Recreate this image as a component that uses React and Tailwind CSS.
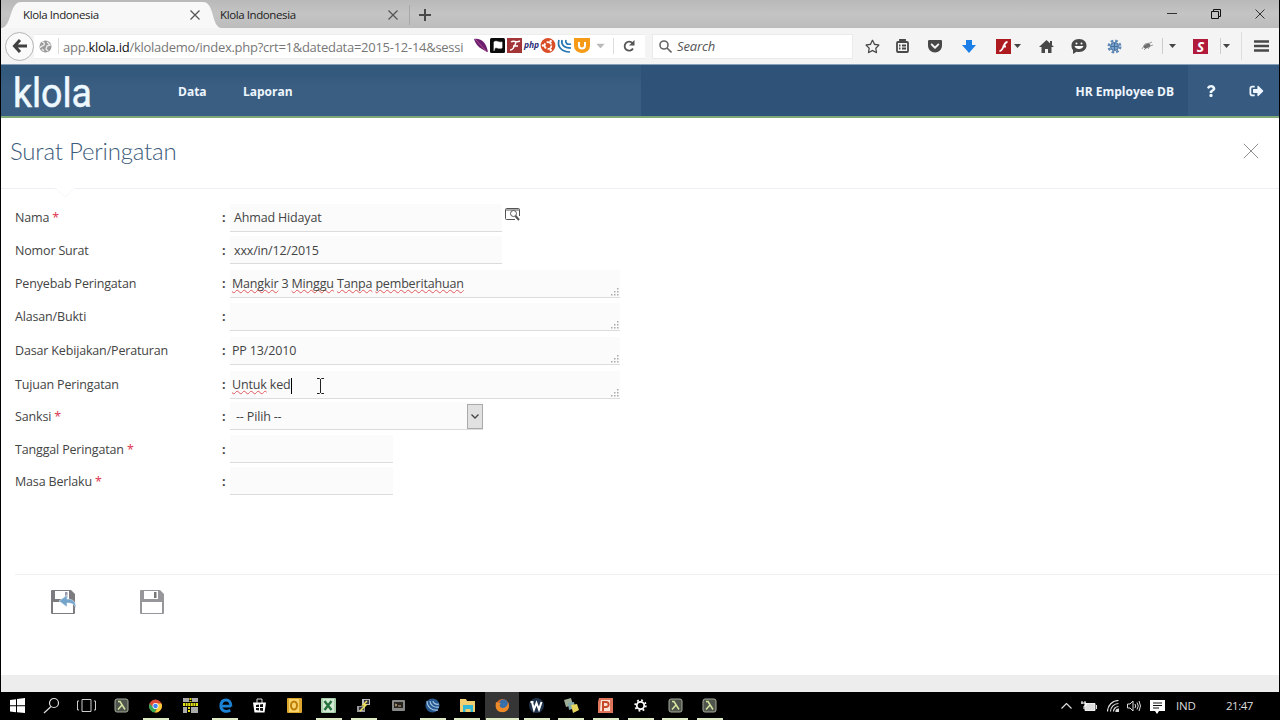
import React from 'react';
import { FaRegStar, FaGetPocket, FaQuestion, FaSignOutAlt } from 'react-icons/fa';

const FIELDS = [
  { label: 'Nama', required: true, row: 'h-[31px]', input: 'w-[272px] pl-1 leading-[27px]', value: ['Ahmad Hidayat'], lookup: true, lead: 'leading-[28px]' },
  { label: 'Nomor Surat', row: 'h-8', input: 'w-[272px] pl-1 leading-[29px]', value: ['xxx/in/12/2015'], lead: 'leading-[27px]' },
  { label: 'Penyebab Peringatan', row: 'h-[34px]', input: 'w-[390px] pl-0.5 leading-[28px]', value: ['~Mangkir', ' 3 ', '~Minggu', ' ', '~Tanpa', ' ', '~pemberitahuan'], area: true, lead: 'leading-[28px]' },
  { label: 'Alasan/Bukti', row: 'h-[33px]', input: 'w-[390px] pl-0.5', value: [], area: true, lead: 'leading-[28px]' },
  { label: 'Dasar Kebijakan/Peraturan', row: 'h-[34px]', input: 'w-[390px] pl-0.5 leading-[28px]', value: ['PP 13/2010'], area: true, lead: 'leading-[28px]' },
  { label: 'Tujuan Peringatan', row: 'h-[34px]', input: 'w-[390px] pl-0.5 leading-[28px]', value: ['~Untuk', ' ked'], area: true, caret: true, lead: 'leading-[28px]' },
  { label: 'Sanksi', required: true, row: 'h-[31px]', input: 'w-[253px] pl-1.5 leading-[30px]', value: ['-- Pilih --'], select: true, lead: 'leading-[27px]' },
  { label: 'Tanggal Peringatan', required: true, row: 'h-[33px]', input: 'w-[163px]', value: [], lead: 'leading-[27px]' },
  { label: 'Masa Berlaku', required: true, row: 'h-8', input: 'w-[163px]', value: [], lead: 'leading-[27px]' },
];

const TASKS = [
  ['start'], ['search'], ['tasks'], ['lambda'], ['chrome', 1], ['grid'], ['edge', 1], ['store'], ['outlook'], ['excel', 1], ['putty', 1],
  ['term'], ['globe', 1], ['folder', 1], ['firefox', 1], ['word', 1], ['notes', 1], ['ppt', 1], ['gear', 1], ['lambda', 1], ['lambda', 1],
];

function Cross({ className }) {
  return (
    <svg className={className} viewBox="0 0 10 10" fill="none" stroke="currentColor"><path d="M.5.5l9 9M9.5.5l-9 9" /></svg>
  );
}

function Caret({ className = 'text-[#444]' }) {
  return <svg className={`w-[7px] h-1 ${className}`} viewBox="0 0 7 4" fill="currentColor"><path d="M0 0h7L3.5 4z" /></svg>;
}

function TabBar() {
  return (
    <div className="relative flex h-7 bg-gradient-to-b from-[#b9b9b9] via-[#c4c4c4] to-[#bcbcbc] text-[11.5px] text-[#1c1c1c]">
      <svg className="absolute left-0 top-0 w-[222px] h-7" viewBox="0 0 222 28"><path d="M0 28C11 28 8 2 20 2H202C214 2 210 28 221 28Z" fill="#f8f8f8" /></svg>
      <div className="relative w-[206px] pl-[22px] pr-[7px] flex items-center justify-between pt-0.5">
        <span className="tracking-[-0.4px]">Klola Indonesia</span>
        <Cross className="w-[10px] h-[10px] text-[#555] [stroke-width:1.3]" />
      </div>
      <div className="w-[202px] pl-[13px] pr-[11px] flex items-center justify-between pt-0.5">
        <span className="tracking-[-0.4px]">Klola Indonesia</span>
        <Cross className="w-[10px] h-[10px] text-[#555] [stroke-width:1.3]" />
      </div>
      <div className="border-l border-[#a8a8a8] h-5 mt-[5px] pl-[9px] flex items-center">
        <svg className="w-3 h-3" viewBox="0 0 12 12" stroke="#484848" strokeWidth="2"><path d="M6 0v12M0 6h12" /></svg>
      </div>
      <div className="ml-auto flex items-center gap-[34px] pr-[14px] text-[#333] -mt-px">
        <svg className="w-2.5 h-2.5" viewBox="0 0 10 10" stroke="currentColor"><path d="M0 4.5h10" /></svg>
        <svg className="w-2.5 h-2.5" viewBox="0 0 10 10" fill="none" stroke="#111"><path d="M.5 2.5h7v7h-7zM2.5 2V.5h7v7H8" /></svg>
        <Cross className="w-2.5 h-2.5" />
      </div>
    </div>
  );
}

function AddonIcons() {
  return (
    <svg className="shrink-0 w-[116px] h-4" viewBox="0 0 116 16">
      <path d="M0 1C8 0 12 5 14 14 8 12 2 8 0 1z" fill="#6c1f6f" /><path d="M1 1l12 13" stroke="#b0508f" strokeWidth="1" />
      <rect x="16" width="15" height="15" rx="1.5" fill="#0b0b0b" /><path d="M20 13V4c3-2 4 1 8 0v6c-4 1-5-1-7 0" fill="#fff" stroke="#fff" strokeWidth=".7" />
      <rect x="33" width="15" height="15" fill="#a33438" /><path d="M37 4c3-2 5 1 9-1M42 4c-1 3-2 8-6 8M39 8h5" stroke="#fff" strokeWidth="1.5" fill="none" />
      <text x="50" y="10" fontSize="8.5" fontStyle="italic" fontWeight="700" fill="#2d2f78" textLength="15">php</text>
      <circle cx="74" cy="7.5" r="7.4" fill="#d94e27" /><circle cx="74" cy="7.5" r="3.4" fill="none" stroke="#fff" strokeWidth="1.7" strokeDasharray="5.6 1.5" /><circle cx="69" cy="7.5" r="1.2" fill="#fff" /><circle cx="76.7" cy="3.1" r="1.2" fill="#fff" /><circle cx="76.7" cy="12" r="1.2" fill="#fff" />
      <path d="M85 2c-2 6 2 12 11 12M88 2c-1 5 2 8 9 8M92 2c-1 3 1 5 5 4" stroke="#2475b1" strokeWidth="1.7" fill="none" />
      <path d="M100 0h16v8a8 7 0 0 1-16 0z" fill="#f59b18" /><path d="M105 4v3.5a3 3 0 0 0 6 0V4" stroke="#fff" strokeWidth="2" fill="none" />
    </svg>
  );
}

function Toolbar() {
  return (
    <div className="flex h-9 bg-[#f4f4f4] items-center text-[#484848]">
      <div className="relative z-10 shrink-0 w-[29px] h-[29px] ml-1 rounded-full border border-[#b5b5b5] bg-[#fafafa] flex items-center justify-center">
        <svg className="w-[15px] h-[14px]" viewBox="0 0 15 14" fill="none" stroke="#404040" strokeWidth="3"><path d="M8 1L2.5 7 8 13M3 7h12" /></svg>
      </div>
      <div className="shrink-0 w-[611px] h-[25px] bg-white border-y border-[#ededed] flex items-center pl-[5px]">
        <svg className="w-[13px] h-[13px]" viewBox="0 0 13 13"><circle cx="6.5" cy="6.5" r="6" fill="#999" /><path d="M3 2c2 0 3 2 2 3S1 6 1.500 8M8 2l3 3-3 1-1 3 2 2M3 9l2 2" stroke="#e9e9e9" strokeWidth="1.400" fill="none" /></svg>
        <span className="ml-[6px] w-px h-4 bg-[#ddd]" />
        <span className="shrink-0 ml-1 w-[411px] pt-[3px] whitespace-nowrap text-[13px] tracking-[-0.27px] text-[#777]">app.<span className="text-[#111]">klola.id</span>/klolademo/index.php?crt=1&amp;datedata=2015-12-14&amp;sessi</span>
        <AddonIcons />
        <Caret className="ml-[7px] text-[#bbb] scale-125" />
        <span className="ml-[9px] w-px h-4 bg-[#ddd]" />
        <svg className="ml-[9px] w-3 h-3" viewBox="0 0 12 12" fill="none" stroke="#555" strokeWidth="1.800"><path d="M10 8.500A4.500 4.500 0 1 1 9.500 3.200" /><path d="M11.500 0v5.500H6z" fill="#555" stroke="none" /></svg>
      </div>
      <div className="ml-[7px] shrink-0 w-[201px] h-[25px] bg-white border border-[#eaeaea] flex items-center pl-1.5">
        <svg className="w-[13px] h-[13px]" viewBox="0 0 13 13" fill="none" stroke="#666" strokeWidth="1.600"><circle cx="5" cy="5" r="4" /><path d="M8 8l4.500 4.500" /></svg>
        <span className="ml-[5px] pt-0.5 text-[13px] tracking-[-0.15px] italic text-[#555]">Search</span>
      </div>
      <div className="flex flex-1 items-center ml-1">
        <span className="shrink-0 w-[30px] flex justify-center"><FaRegStar className="w-[15px] h-[15px]" /></span>
        <span className="shrink-0 w-[30px] flex justify-center">
          <svg className="w-[13px] h-[14px]" viewBox="0 0 13 14" fill="none" stroke="currentColor" strokeWidth="1.800"><rect x="1" y="3" width="11" height="10" rx="1" /><path d="M4 3V1h5v2M3 6.500h1.500M6 6.500h4M3 9.500h1.500M6 9.500h4" /></svg>
        </span>
        <span className="shrink-0 w-9 flex justify-center"><FaGetPocket className="w-[16px] h-[16px]" /></span>
        <span className="shrink-0 w-8 flex justify-center">
          <svg className="w-[14px] h-[13px]" viewBox="0 0 14 13" fill="#1c7fe8"><path d="M4 0h6v5h4L7 13 0 5h4z" /></svg>
        </span>
        <span className="ml-[9px] shrink-0 w-[18px] flex justify-center">
          <svg className="w-[15px] h-[15px]" viewBox="0 0 15 15"><rect width="15" height="15" fill="#ad1b20" /><path d="M11.500 3C7 3 8 12 3.500 12M6.500 7.500H10" stroke="#fff" strokeWidth="1.800" fill="none" /></svg>
        </span>
        <span className="shrink-0 w-2.5 flex justify-center"><Caret /></span>
        <span className="shrink-0 w-12 flex justify-center">
          <svg className="w-[15px] h-[13px]" viewBox="0 0 15 13" fill="#484848"><path d="M7.500 0L15 7H0zM11 1h2v4h-2z" /><path d="M2.500 6.500L7.500 2l5 4.500V13H9V9H6v4H2.500z" /></svg>
        </span>
        <span className="shrink-0 w-[18px] flex justify-center">
          <svg className="w-[16px] h-[15px]" viewBox="0 0 16 15"><path d="M8 0c5 0 7.500 3 7.500 6.500S13 13 8 13c-1 0-2 0-2.500-.2L2 15v-4C.8 10 .5 8 .5 6.500.500 3 3 0 8 0z" fill="#484848" /><circle cx="5.500" cy="4.500" r="1" fill="#fff" /><circle cx="10.500" cy="4.500" r="1" fill="#fff" /><path d="M3.500 7h9c-1 4-8 4-9 0z" fill="#fff" /></svg>
        </span>
        <span className="shrink-0 w-[52px] flex justify-center">
          <svg className="w-[15px] h-[15px]" viewBox="0 0 15 15" fill="none"><circle cx="7.500" cy="7.500" r="5.700" stroke="#5f8ab8" strokeWidth="2.600" strokeDasharray="2.600 1.880" /><circle cx="7.500" cy="7.500" r="4" fill="#78a4cf" stroke="#456f9c" /><path d="M4 7.500h7M7.500 4v7" stroke="#456f9c" /></svg>
        </span>
        <span className="shrink-0 w-[14px] flex justify-center">
          <svg className="w-[12px] h-[10px]" viewBox="0 0 12 10"><path d="M1 8L4 3l5-1 2-1M3 9l2-2M7 8l2-3 3-1" stroke="#999" fill="none" /><ellipse cx="6" cy="5" rx="3.500" ry="2" transform="rotate(-25 6 5)" fill="#6e6e6e" /></svg>
        </span>
        <span className="ml-2 w-px h-4 bg-[#ccc]" />
        <span className="shrink-0 w-[18px] flex justify-center"><Caret /></span>
        <span className="shrink-0 w-[39px] flex justify-center"><span className="w-[15px] h-[15px] bg-[#b21a3b] text-white text-[14px] leading-[15px] font-bold italic text-center">S</span></span>
        <span className="w-px h-4 bg-[#ccc]" />
        <span className="shrink-0 w-[11px] flex justify-center"><Caret /></span>
        <span className="ml-[9px] w-px h-7 bg-[#dedede]" />
        <span className="shrink-0 w-[38px] flex justify-center">
          <svg className="w-[15px] h-3" viewBox="0 0 15 12" stroke="#484848" strokeWidth="2.500"><path d="M0 1.500h15M0 6h15M0 10.500h15" /></svg>
        </span>
      </div>
    </div>
  );
}

function AppHeader() {
  return (
    <header className="flex h-[54px] border-b-2 border-[#7fa878] border-t border-t-[#86a0ba] bg-[#2f5378] text-[#eef6ff] text-[12px] font-bold">
      <div className="w-[640px] flex items-center bg-gradient-to-b from-[#33597c] from-20% to-[#3a5e82] to-40%">
        <svg className="w-[82px] h-[50px] ml-3 overflow-visible" viewBox="0 0 82 50">
          <text x="0" y="40.500" fontSize="40" fontFamily="Roboto" fontWeight="400" fill="#eef8ff" stroke="#eef8ff" strokeWidth=".5" textLength="79" lengthAdjust="spacingAndGlyphs">klola</text>
        </svg>
        <span className="ml-[83px] w-[65px] pt-0.5">Data</span>
        <span className="pt-0.5">Laporan</span>
      </div>
      <div className="flex-1 flex items-center justify-end pr-[14px] pt-0.5">HR Employee DB</div>
      <div className="w-[91px] flex items-center bg-[#375b80]">
        <FaQuestion className="ml-[18px] w-[10px] h-[12px]" />
        <FaSignOutAlt className="ml-[33px] w-[15px] h-[14px]" />
      </div>
    </header>
  );
}

function Grip() {
  return (
    <svg className="absolute right-px bottom-[1px] w-2 h-2" viewBox="0 0 8 8" fill="#aaa"><path d="M6 0h1.500v1.500H6zM6 3h1.500v1.500H6zM6 6h1.500v1.500H6zM3 3h1.500v1.500H3zM3 6h1.500v1.500H3zM0 6h1.500v1.500H0z" /></svg>
  );
}

function Field({ f }) {
  return (
    <div className={`flex items-end ${f.row}`}>
      <div className={`w-[207px] ${f.lead}`}>{f.label}{f.required && <span className="text-[#e0324b]"> *</span>}</div>
      <div className={`w-2 font-bold ${f.lead}`}>:</div>
      <div className={`relative h-7 border-b border-[#dcdcdc] bg-[#fbfbfb] whitespace-pre ${f.input}`}>
        {f.value.map((part, i) => part[0] === '~'
          ? <span key={i} className="underline decoration-wavy decoration-[#e0595c] decoration-[0.5px] underline-offset-1 [text-decoration-skip-ink:none]">{part.slice(1)}</span>
          : <span key={i}>{part}</span>)}
        {f.caret && <span className="inline-block w-px h-4 bg-black align-middle" />}
        {f.area && <Grip />}
        {f.select && (
          <span className="absolute right-0 bottom-0 w-4 h-[25px] border border-[#aaa] bg-[#e1e1e1] flex items-center justify-center">
            <svg className="w-2 h-[5px]" viewBox="0 0 8 5" fill="none" stroke="#444" strokeWidth="1.300"><path d="M.5.500L4 4 7.500.500" /></svg>
          </span>
        )}
      </div>
      {f.lookup && (
        <svg className="ml-[3px] mb-[11px] w-[15px] h-[14px]" viewBox="0 0 15 14" fill="none" stroke="#555"><path d="M14.500 9V2.500a1 1 0 0 0-1-1h-12a1 1 0 0 0-1 1v9a1 1 0 0 0 1 1H10M1 3h13" /><circle cx="8.500" cy="6.500" r="3" fill="#fff" /><path d="M10.500 9l3.500 4" strokeWidth="2" /></svg>
      )}
    </div>
  );
}

function Floppy({ back }) {
  const shell = back ? '#7c7c80' : '#97979b';
  return (
    <svg className="w-[27px] h-[26px]" viewBox="0 0 27 26">
      <path d="M1 2a1 1 0 0 1 1-1h19l4 4v19a1 1 0 0 1-1 1H2a1 1 0 0 1-1-1z" fill={shell} />
      <path d="M5 2h14v8H5zM3 13h20v11H3z" fill="#fff" />
      <path d="M15 3h2.500v6H15z" fill={back ? '#99a' : '#777'} />
      {back && <path d="M9 12l8-6v4c6 0 9 3 9 9-2-4-4-5-9-5v4z" fill="#76a5cb" stroke="#f4f8fb" strokeWidth=".5" />}
    </svg>
  );
}

function TaskIcon({ name }) {
  switch (name) {
    case 'start': return <path d="M0 2l6-.8v6H0zM7 1l8-1v7.200H7zM0 8.200h6v6L0 13.400zM7 8.200h8V15l-8-.8z" fill="#fff" />;
    case 'search': return <g fill="none" stroke="#ddd" strokeWidth="1.200"><circle cx="10" cy="5" r="4.500" /><path d="M7 8.500L0 15" /></g>;
    case 'tasks': return <g fill="none" stroke="#ccc"><path d="M3 1.500h9v12H3zM0 3h-1.500v9H0M15 3h1.500v9H15" /></g>;
    case 'lambda': return <g><rect x="1" y="1" width="13" height="13" rx="2" fill="#4f554c" stroke="#a5aa9a" /><path d="M4 3.500h2l5 8M8 7l-4 4.500" stroke="#d8e5a2" strokeWidth="1.500" fill="none" /></g>;
    case 'chrome': return <g><circle cx="7.500" cy="8" r="6.500" fill="#dc4a38" /><path d="M1.500 5.500A6.500 6.500 0 0 0 7 14.500L9.500 9 5 9z" fill="#35a853" /><path d="M7 14.500A6.500 6.500 0 0 0 13.500 5.500H8L10 9z" fill="#f7ca3a" /><circle cx="7.500" cy="8" r="3" fill="#fff" /><circle cx="7.500" cy="8" r="2.300" fill="#4285f4" /></g>;
    case 'grid': return <g><path d="M0 0h6v4H0zM9 0h6v4H9zM0 9h4v6H0zM8 9h7v6H8z" fill="#aaa" /><path d="M0 6.500h15" stroke="#e5e218" strokeWidth="3" strokeDasharray="2 .6" /><path d="M6 9v6M7.500 0v4" stroke="#e5e218" strokeWidth="2" strokeDasharray="2 1" /></g>;
    case 'edge': return <path d="M2.500 8.200H13M13 8.500C13 4 11 2 8 2S3 4 2.800 8c0 5 5 6.500 9.500 4.300" fill="none" stroke="#1b82d4" strokeWidth="2.800" />;
    case 'store': return <g><path d="M1 4.500h13l-1.500 10h-10z" fill="#fff" /><path d="M5 5V1h5v4" fill="none" stroke="#ddd" /><path d="M4 7l3-.5v2.500H4zM8 6.500l3-.5v3H8zM4 10h3v2.500L4 12zM8 10h3v3l-3-.5z" fill="#111" /></g>;
    case 'outlook': return <g><rect width="15" height="15" rx="1" fill="#dda72d" /><rect x="2" y="1" width="10" height="13" fill="#f8d36b" /><ellipse cx="7" cy="7.500" rx="3" ry="4" fill="none" stroke="#bd7e08" strokeWidth="2" /></g>;
    case 'excel': return <g><rect width="15" height="15" rx="1" fill="#a6cfaa" /><path d="M2 1h11v13H2z" fill="#d4ead5" /><path d="M3.500 3l7 9M10.500 3l-7 9" stroke="#26723d" strokeWidth="2.400" /></g>;
    case 'putty': return <g><rect x="6" y="1" width="8" height="6" fill="#bbb" /><rect x="1" y="8" width="8" height="6" fill="#999" /><rect x="8" y="2" width="5" height="4" fill="#334" /><rect x="3" y="9" width="5" height="3" fill="#334" /><path d="M11 3L7 7h3l-6 6" stroke="#eee25a" strokeWidth="1.500" fill="none" /></g>;
    case 'term': return <g><rect x="1" y="2" width="13" height="11" rx="1" fill="#888" /><rect x="3" y="4" width="9" height="6" fill="#282521" /><path d="M4 6l2 1-2 1M7 8h3" stroke="#c5a87a" fill="none" /></g>;
    case 'globe': return <g><circle cx="7.500" cy="7.500" r="7" fill="#26588f" /><path d="M2 3c0 6 5 10 11 9M5 3c0 4 4 7 9 6M8 3c0 2 3 4 6 3" stroke="#a6c6e5" fill="none" strokeWidth="1.200" /></g>;
    case 'folder': return <g><path d="M0 1h6l1 2h8v11H0z" fill="#f1ce70" /><path d="M3 7h10v7h-2.500v-3h-5v3H3z" fill="#32b8d5" /></g>;
    case 'firefox': return <g><circle cx="7.500" cy="7.500" r="6.500" fill="#df6a21" /><circle cx="8.500" cy="6" r="4.500" fill="#376fab" /><path d="M1 4c1 1 4 0 5 2-2 0-2 3 1 4 3 0 6-2 6-6 3 7-2 11-7 10S0 9 1 4z" fill="#ed8b28" /></g>;
    case 'word': return <g><circle cx="7.500" cy="7.500" r="7.500" fill="#20324a" /><path d="M1.500 4h3M3 4l2 7.500L7.500 5l2.500 6.500L12.500 4" stroke="#fff" strokeWidth="2" fill="none" /></g>;
    case 'notes': return <g><path d="M0 2l7-2 2 7-7 2z" fill="#9fae97" /><path d="M4 5l6-1 1 6-6 2z" fill="#82a9ac" /><path d="M7 7l6-1 2 6-6 3z" fill="#e6d45c" /></g>;
    case 'ppt': return <g><path d="M1 0h14v15H0V4z" fill="#df765b" /><path d="M3 2h9v11H2z" fill="#fae2d6" /><path d="M5 13V4h3c4 0 3 5 0 5H6" stroke="#c8482a" strokeWidth="2" fill="none" /></g>;
    case 'gear': return <g fill="none" stroke="#fff"><circle cx="7.500" cy="7.500" r="3.700" strokeWidth="1.800" /><circle cx="7.500" cy="7.500" r="5.300" strokeWidth="1.800" strokeDasharray="1.800 2.363" /></g>;
    default: return null;
  }
}

function Taskbar() {
  return (
    <footer className="flex h-7 bg-black text-[#ddd]">
      <div className="flex">
        {TASKS.map(([name, open], i) => (
          <div key={i} className={`relative w-[34.64px] flex items-center justify-center ${name === 'firefox' ? 'bg-[#363636]' : ''}`}>
            <svg className="w-[15px] h-[15px] -mt-px overflow-visible" viewBox="0 0 15 15"><TaskIcon name={name} /></svg>
            {open && <span className={`absolute bottom-0 h-0.5 bg-[#dfebc5] ${name === 'firefox' ? 'w-[33px]' : 'w-[26px]'}`} />}
          </div>
        ))}
      </div>
      <div className="ml-auto flex items-center text-[11.5px]">
        <svg className="w-[11px] h-[6px]" viewBox="0 0 11 6" fill="none" stroke="#ddd" strokeWidth="1.200"><path d="M.5 5.500l5-5 5 5" /></svg>
        <svg className="ml-[9px] w-4 h-3" viewBox="0 0 16 12"><path d="M4 3.500h10v7H4z" fill="#ddd" stroke="#eee" /><path d="M15 5h1v4h-1z" fill="#ddd" /><path d="M1 1v3M4 1v3M0 3h5v3H3v3" fill="none" stroke="#fff" /></svg>
        <svg className="ml-[10px] w-3 h-3" viewBox="0 0 12 12" fill="none" stroke="#ddd" strokeWidth="1.200"><path d="M.5 11.500a11 11 0 0 1 11-11M3.500 11.500a8 8 0 0 1 8-8M6.500 11.500a5 5 0 0 1 5-5" /><path d="M9 11.500a2.500 2.500 0 0 1 2.500-2.500v2.500z" fill="#ddd" /></svg>
        <svg className="ml-2 w-[14px] h-3" viewBox="0 0 14 12" fill="none" stroke="#ddd"><path d="M.5 4h2.500l3-3v10L3 8H.500zM8 4q1.500 2 0 4M10 2.500q2.500 3.500 0 7M12 1q3 5 0 10" /></svg>
        <svg className="ml-[9px] w-[15px] h-[15px]" viewBox="0 0 15 15"><path d="M0 1h15v11H9l-2 3-2-3H0z" fill="#fff" /><path d="M3 4h9M3 6.500h9M3 9h6" stroke="#111" /></svg>
        <span className="ml-[11px] w-[50px] -mt-px tracking-[-0.2px]">IND</span>
        <span className="w-[54px] -mt-px tracking-[-0.5px]">21:47</span>
      </div>
    </footer>
  );
}

export default function App() {
  return (
    <div className="w-[1280px] h-[720px] overflow-hidden bg-black font-['Open_Sans',sans-serif] flex flex-col">
      <div className="h-[692px] ml-px mr-px bg-white flex flex-col">
        <TabBar />
        <Toolbar />
        <AppHeader />
        <div className="h-[71px] pl-[9px] pr-5 border-b border-[#eceff3] flex items-center justify-between">
          <h1 className="font-['Lato'] font-light text-[24px] tracking-[-0.2px] text-[#3d5c7a] mt-[-5px]">Surat Peringatan</h1>
          <Cross className="w-4 h-4 text-[#8a8a8a] mt-[-5px] [stroke-width:0.6]" />
        </div>
        <svg className="w-[20px] h-[10px] ml-[54px] -mt-px" viewBox="0 0 20 10"><path d="M0 0l10 9L20 0" fill="#fff" stroke="#f4f6f8" /></svg>
        <main className="relative pl-[14px] pt-[3px] h-[376px] text-[12.5px] tracking-[-0.16px] text-[#444]">
          {FIELDS.map(f => <Field key={f.label} f={f} />)}
          {/* text cursor */}
          <svg className="absolute left-[316px] top-[180px] w-[7px] h-4" viewBox="0 0 7 16" fill="none" stroke="#222"><path d="M0 .5h2.500l1 1 1-1H7M3.500 1v14M0 15.500h2.500l1-1 1 1H7" /></svg>
        </main>
        <div className="ml-[14px] flex-1 border-t border-[#f0f0f0] pl-[35px] pt-[14px] flex gap-[62px] items-start">
          <Floppy back />
          <Floppy />
        </div>
        <div className="h-[17px] bg-[#ededed]" />
      </div>
      <Taskbar />
    </div>
  );
}
